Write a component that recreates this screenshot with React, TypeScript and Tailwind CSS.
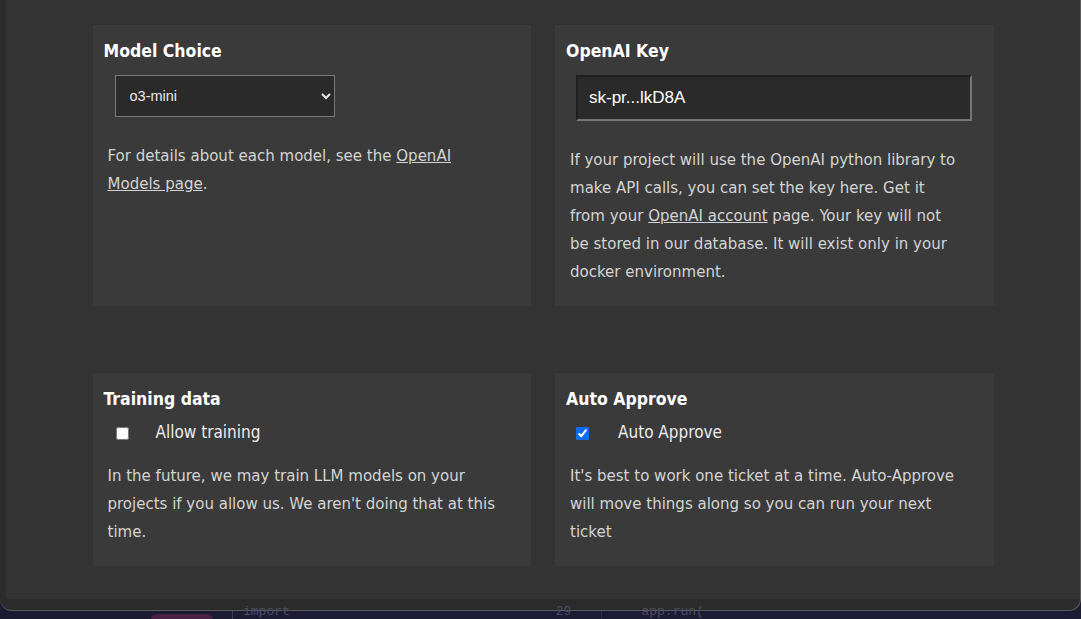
import { useState } from "react";

const font = { fontFamily: '"DejaVu Sans Condensed", "DejaVu Sans", sans-serif' };

function Card({ title, children }: { title: string; children: React.ReactNode }) {
  return (
    <div className="bg-[#3a3a3a] pt-[16px] pb-[21px] px-[11px]">
      <h3 className="text-[17.5px] leading-[20px] font-bold text-white">{title}</h3>
      {children}
    </div>
  );
}

function Para({ children }: { children: React.ReactNode }) {
  return <p className="ml-[4px] mr-[22px] text-[16.7px] leading-[28px] text-[#d4d4d4]">{children}</p>;
}

export default function App() {
  const [model, setModel] = useState("o3-mini");
  const [allow, setAllow] = useState(false);
  const [auto, setAuto] = useState(true);

  return (
    <div className="h-[619px] overflow-hidden bg-[#1d1b34]" style={font}>
      {/* settings window */}
      <div className="h-[611px] bg-[#2b2b2b] border-b border-r border-[#5c5c5c] rounded-b-[12px] pl-[6px] overflow-hidden">
        <div className="h-[599px] bg-[#333333]">
          <div className="mx-auto w-[901px] pt-[25px] grid grid-cols-2 gap-x-[24px] gap-y-[67px]">
            <Card title="Model Choice">
              <select
                value={model}
                onChange={(e) => setModel(e.target.value)}
                className="mt-[14px] ml-[11px] w-[220px] h-[42px] bg-[#2a2a2a] border border-[#7a7a7a] text-[#e8e8e8] text-[14.5px] pl-[10px] pr-[6px]"
                style={{ fontFamily: '"Liberation Sans", Arial, sans-serif', colorScheme: "dark" }}
              >
                <option>o3-mini</option>
                <option>o1</option>
                <option>gpt-4o</option>
              </select>
              <div className="mt-[24px]">
                <Para>
                  For details about each model, see the <a className="underline">OpenAI Models page</a>.
                </Para>
              </div>
            </Card>

            <Card title="OpenAI Key">
              <input
                defaultValue="sk-pr...lkD8A"
                className="mt-[14px] ml-[10px] w-[396px] h-[46px] bg-[#2a2a2a] border-2 border-t-[#1f1f1f] border-l-[#1f1f1f] border-b-[#767676] border-r-[#767676] text-white text-[17px] px-[11px] outline-none"
                style={{ fontFamily: '"Liberation Sans", Arial, sans-serif' }}
              />
              <div className="mt-[24px]">
                <Para>
                  If your project will use the OpenAI python library to make API calls, you can set the key here. Get it from your{" "}
                  <a className="underline">OpenAI account</a> page. Your key will not be stored in our database. It will exist only in your docker environment.
                </Para>
              </div>
            </Card>

            <Card title="Training data">
              <label className="flex items-center h-[24px] mt-[12px] ml-[12px] text-[17px] text-[#ececec]">
                <input type="checkbox" checked={allow} onChange={() => setAllow(!allow)} className="w-[13px] h-[13px] m-0 accent-[#0b6cf0]" />
                <span className="ml-[27px]">Allow training</span>
              </label>
              <div className="mt-[16px]">
                <Para>In the future, we may train LLM models on your projects if you allow us. We aren't doing that at this time.</Para>
              </div>
            </Card>

            <Card title="Auto Approve">
              <label className="flex items-center h-[24px] mt-[12px] ml-[10px] text-[17px] text-[#ececec]">
                <input type="checkbox" checked={auto} onChange={() => setAuto(!auto)} className="w-[13px] h-[13px] m-0 accent-[#0b6cf0]" />
                <span className="ml-[29px]">Auto Approve</span>
              </label>
              <div className="mt-[16px]">
                <Para>It's best to work one ticket at a time. Auto-Approve will move things along so you can run your next ticket</Para>
              </div>
            </Card>
          </div>
        </div>
      </div>

      {/* editor peeking out underneath */}
      <div className="flex items-start h-[8px] text-[13px] leading-[14px] text-[#4e4c66] font-mono">
        <div className="w-[151px] bg-[#1b1a30] h-full" />
        <div className="w-[62px] h-full bg-[#4a2244] rounded-t-[6px] mt-[3px]" />
        <div className="w-[19px]" />
        <div className="w-px h-full bg-[#2f4a44]" />
        <span className="ml-[10px] -mt-[6px]">import</span>
        <div className="w-[266px]" />
        <span className="-mt-[6px]">29</span>
        <div className="ml-[30px] w-px h-full bg-[#2d2b45]" />
        <span className="ml-[39px] -mt-[6px]">app.run(</span>
      </div>
    </div>
  );
}
